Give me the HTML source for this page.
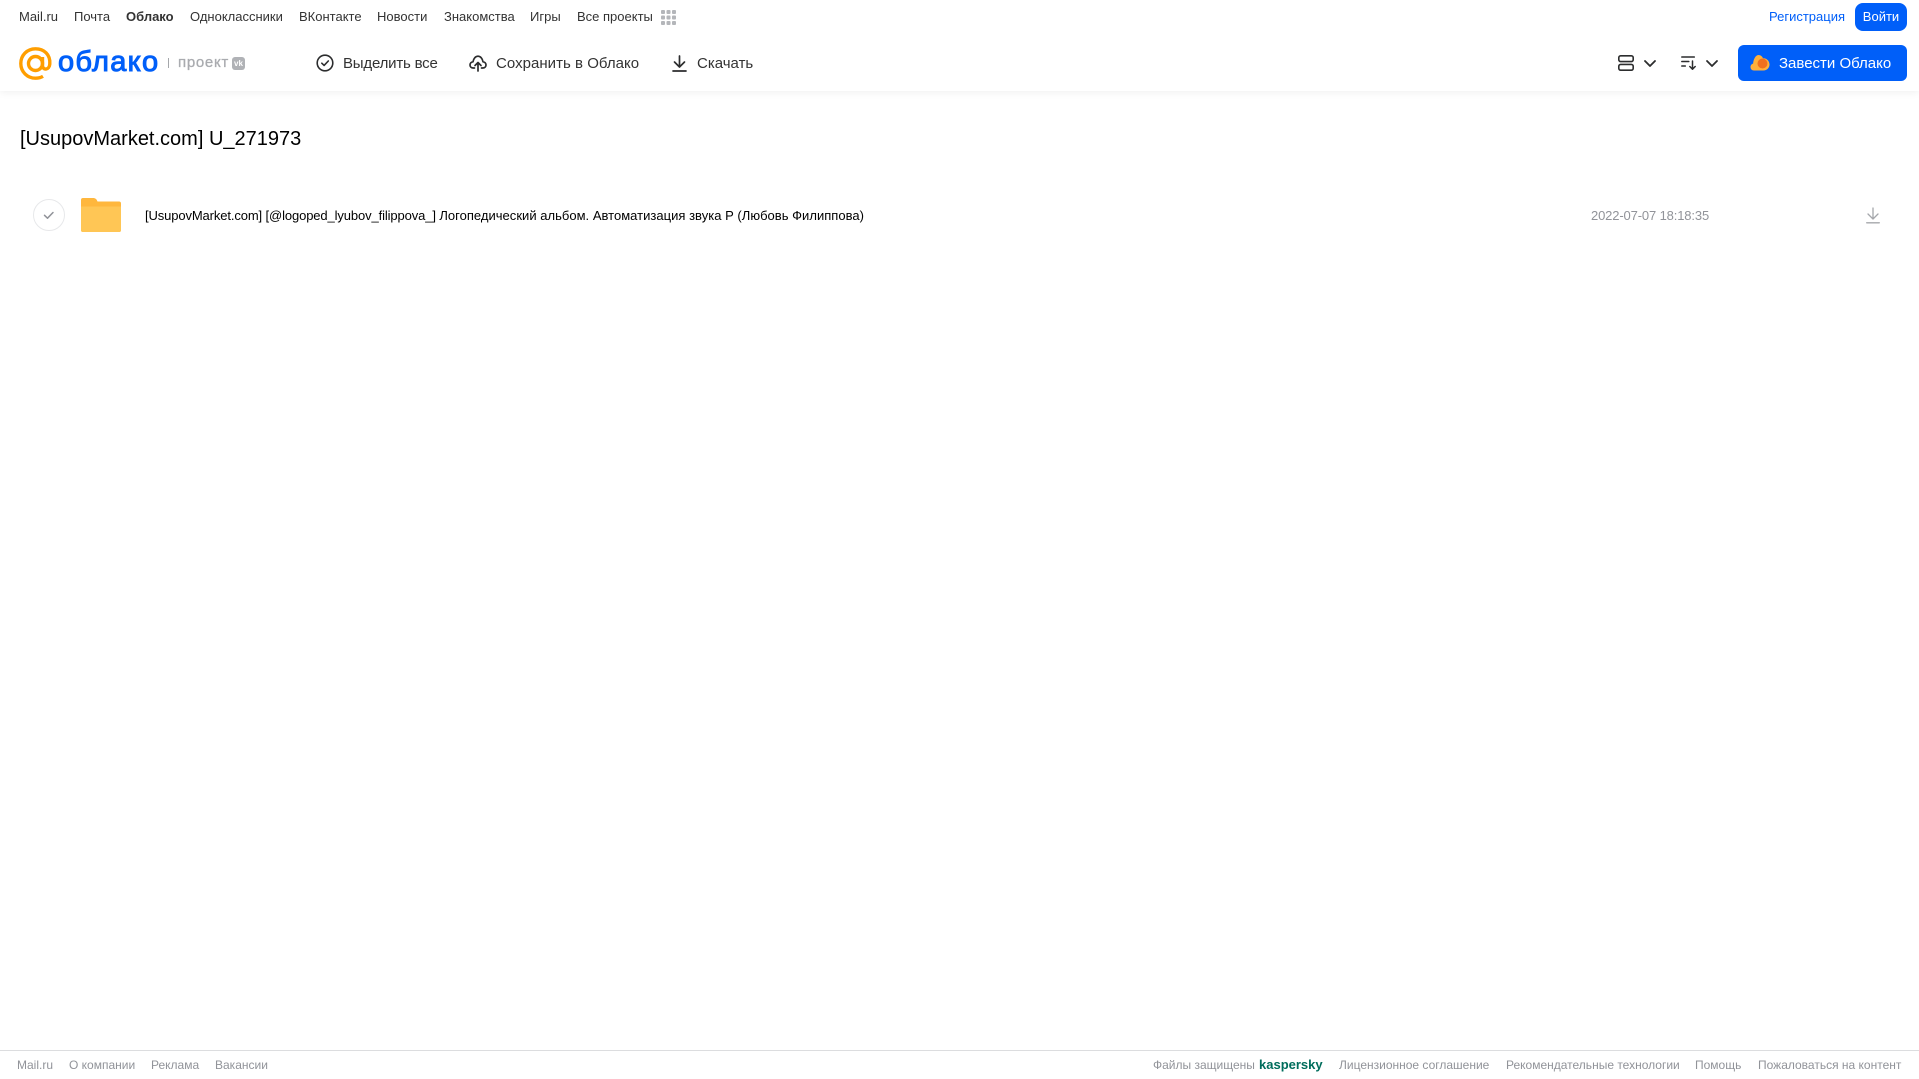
<!DOCTYPE html>
<html lang="ru">
<head>
<meta charset="utf-8">
<title>Облако</title>
<style>
html,body{margin:0;padding:0;background:#fff;}
body{width:1919px;height:1079px;position:relative;overflow:hidden;font-family:"Liberation Sans",sans-serif;}
.t{position:absolute;white-space:nowrap;line-height:20px;height:20px;}
.n{top:7px;font-size:13px;color:#333;}
.a{top:53.500px;font-size:15px;color:#333;}
.f{top:1055px;font-size:12px;color:#919399;}
svg{position:absolute;overflow:visible;}
#hdr{position:absolute;left:0;top:0;width:1919px;height:91px;background:#fff;box-shadow:0 1px 8px rgba(0,0,0,.07);}
.btn{position:absolute;background:#005ff9;}
</style>
</head>
<body>
<div id="hdr"></div>

<span class="t n" style="left:19px">Mail.ru</span>
<span class="t n" style="left:74px">Почта</span>
<span class="t n" style="left:126px;font-weight:bold">Облако</span>
<span class="t n" style="left:190px">Одноклассники</span>
<span class="t n" style="left:299px">ВКонтакте</span>
<span class="t n" style="left:377px">Новости</span>
<span class="t n" style="left:444px">Знакомства</span>
<span class="t n" style="left:530px">Игры</span>
<span class="t n" style="left:577px">Все проекты</span>
<svg style="left:661px;top:10px" width="15" height="15" viewBox="0 0 15 15" fill="#b4b6ba">
<rect x="0" y="0" width="4" height="4" rx="1"/><rect x="5.500" y="0" width="4" height="4" rx="1"/><rect x="11" y="0" width="4" height="4" rx="1"/>
<rect x="0" y="5.500" width="4" height="4" rx="1"/><rect x="5.500" y="5.500" width="4" height="4" rx="1"/><rect x="11" y="5.500" width="4" height="4" rx="1"/>
<rect x="0" y="11" width="4" height="4" rx="1"/><rect x="5.500" y="11" width="4" height="4" rx="1"/><rect x="11" y="11" width="4" height="4" rx="1"/>
</svg>

<svg style="left:19px;top:47px" width="33" height="33" viewBox="0 0 33 33" fill="none" stroke="#ff9e00" stroke-width="3.400">
<circle cx="16.500" cy="16.500" r="7"/>
<path d="M23.500 10v8.500c0 5 6.800 5 7.300-1.500C31.500 7.500 25 1.800 16.500 1.800 8 1.800 1.800 8.300 1.800 16.500c0 8.500 6.700 14.700 14.700 14.700 3 0 5.500-.7 7.500-1.900"/>
</svg>
<span class="t" style="left:58px;top:44px;height:36px;line-height:36px;font-size:29px;font-weight:normal;-webkit-text-stroke:1px #005ff9;letter-spacing:1.300px;color:#005ff9">облако</span>
<div style="position:absolute;left:168px;top:58px;width:1px;height:10px;background:#a5a7ab"></div>
<span class="t" style="left:178px;top:53px;font-size:15px;color:#a9abaf;letter-spacing:.7px;-webkit-text-stroke:.3px #a9abaf">проект</span>
<div style="position:absolute;left:232px;top:57px;width:13px;height:13px;border-radius:3px;background:#b0b2b6;color:#fff;font-size:8px;font-weight:bold;line-height:13px;text-align:center">vk</div>

<svg style="left:316px;top:54px" width="18" height="18" viewBox="0 0 18 18" fill="none" stroke="#2c2d2e" stroke-width="1.600" stroke-linecap="round" stroke-linejoin="round">
<circle cx="9" cy="9" r="7.800"/><path d="M5.800 9.200l2.300 2.200 4.200-4.400"/>
</svg>
<span class="t a" style="left:343px;letter-spacing:-.2px">Выделить все</span>

<svg style="left:469px;top:55px" width="18" height="17" viewBox="0 0 18 17" fill="none" stroke="#2c2d2e" stroke-width="1.700" stroke-linecap="round" stroke-linejoin="round">
<path d="M5.500 13H4.300C2.300 13 1 11.600 1 10c0-1.700 1.200-3 3-3.200C4.500 3.500 6.500 1.200 9 1.200s4.500 2.300 5 5.600c1.800.2 3 1.500 3 3.200 0 1.600-1.300 3-3.300 3h-1.200"/>
<path d="M9 16V8M6 10.500L9 7.500l3 3"/>
</svg>
<span class="t a" style="left:496px;letter-spacing:.03px">Сохранить в Облако</span>

<svg style="left:672px;top:55px" width="15" height="17" viewBox="0 0 15 17" fill="none" stroke="#2c2d2e" stroke-width="1.700" stroke-linecap="round" stroke-linejoin="round">
<path d="M7.500 1v10.500M2.500 7l5 5 5-5M1 16h13"/>
</svg>
<span class="t a" style="left:697px">Скачать</span>

<svg style="left:1618px;top:55px" width="16" height="16" viewBox="0 0 16 16" fill="none" stroke="#2c2d2e" stroke-width="1.600">
<rect x=".8" y=".8" width="14.400" height="5.800" rx="1.800"/><rect x=".8" y="9.400" width="14.400" height="5.800" rx="1.800"/>
</svg>
<svg style="left:1644px;top:60px" width="12" height="7" viewBox="0 0 12 7" fill="none" stroke="#2c2d2e" stroke-width="1.800" stroke-linecap="round" stroke-linejoin="round"><path d="M1 1l5 5 5-5"/></svg>
<svg style="left:1681px;top:56px" width="16" height="14" viewBox="0 0 16 14" fill="none" stroke="#2c2d2e" stroke-width="1.500" stroke-linecap="round" stroke-linejoin="round">
<path d="M.8 1h12.500M.8 5.500h7M.8 10h3.500M11.500 5v8M8.800 10.500l2.700 2.700 2.700-2.700"/>
</svg>
<svg style="left:1706px;top:60px" width="12" height="7" viewBox="0 0 12 7" fill="none" stroke="#2c2d2e" stroke-width="1.800" stroke-linecap="round" stroke-linejoin="round"><path d="M1 1l5 5 5-5"/></svg>

<span class="t" style="left:1769px;top:7px;font-size:13px;color:#005ff9">Регистрация</span>
<div class="btn" style="left:1855px;top:3px;width:52px;height:28px;border-radius:8px;color:#fff;font-size:13px;line-height:28px;text-align:center">Войти</div>
<div class="btn" style="left:1738px;top:45px;width:169px;height:36px;border-radius:6px"></div>
<svg style="left:1750px;top:54px" width="20" height="18" viewBox="0 0 20 18">
<path fill="#ffb03b" d="M4 16.500C1.800 16.500 .5 15 .5 13c0-1.800 1.100-3 2.600-3.400C3.300 6 5.300 1 8.500 1c2.300 0 3.800 1.500 4.500 3.300 3.500-.3 6.500 2.700 6.500 6.200 0 3.400-2.700 6-6 6z"/>
<circle cx="12.500" cy="9.500" r="5" fill="#f0701e"/>
</svg>
<span class="t" style="left:1779px;top:53.500px;font-size:15px;color:#fff">Завести Облако</span>

<span class="t" style="left:20px;top:127px;height:24px;line-height:24px;font-size:20px;color:#000">[UsupovMarket.com] U_271973</span>

<svg style="left:33px;top:199px" width="32" height="32" viewBox="0 0 32 32" fill="none">
<circle cx="16" cy="16" r="15.500" stroke="#e7e8ea"/>
<path d="M11.500 16.300l3 2.900 5.500-5.700" stroke="#919399" stroke-width="1.500" stroke-linecap="round" stroke-linejoin="round"/>
</svg>
<svg style="left:81px;top:198px" width="40" height="34" viewBox="0 0 40 34">
<path fill="#ffb73d" d="M2 0h10c2.500 0 3.500 1 4.500 3.500H38a2 2 0 0 1 2 2V32a2 2 0 0 1-2 2H2a2 2 0 0 1-2-2V2a2 2 0 0 1 2-2z"/>
<path fill="#ffc655" d="M0 8.500h40V32a2 2 0 0 1-2 2H2a2 2 0 0 1-2-2z"/>
</svg>
<span class="t" style="left:145px;top:205.500px;font-size:13px;color:#000;letter-spacing:-.12px">[UsupovMarket.com] [@logoped_lyubov_filippova_] <span style="letter-spacing:.02px">Логопедический альбом. Автоматизация звука Р (Любовь Филиппова)</span></span>
<span class="t" style="left:1591px;top:205.500px;font-size:13px;color:#919399;letter-spacing:-.14px">2022-07-07 18:18:35</span>
<svg style="left:1866px;top:207px" width="14" height="17" viewBox="0 0 14 17" fill="none" stroke="#a5a7ab" stroke-width="1.300" stroke-linecap="round" stroke-linejoin="round">
<path d="M7 1v10.500M2 7l5 5 5-5M.7 15.800h12.600"/>
</svg>

<div style="position:absolute;left:0;top:1050px;width:1919px;height:1px;background:#dcdddf"></div>
<span class="t f" style="left:17px">Mail.ru</span>
<span class="t f" style="left:69px">О компании</span>
<span class="t f" style="left:151px">Реклама</span>
<span class="t f" style="left:215px">Вакансии</span>
<span class="t f" style="left:1153px">Файлы защищены</span>
<span class="t f" style="left:1259px;font-size:13px;font-weight:bold;color:#006d5c">kaspersky</span>
<span class="t f" style="left:1339px">Лицензионное соглашение</span>
<span class="t f" style="left:1506px">Рекомендательные технологии</span>
<span class="t f" style="left:1695px">Помощь</span>
<span class="t f" style="left:1758px">Пожаловаться на контент</span>
</body>
</html>
